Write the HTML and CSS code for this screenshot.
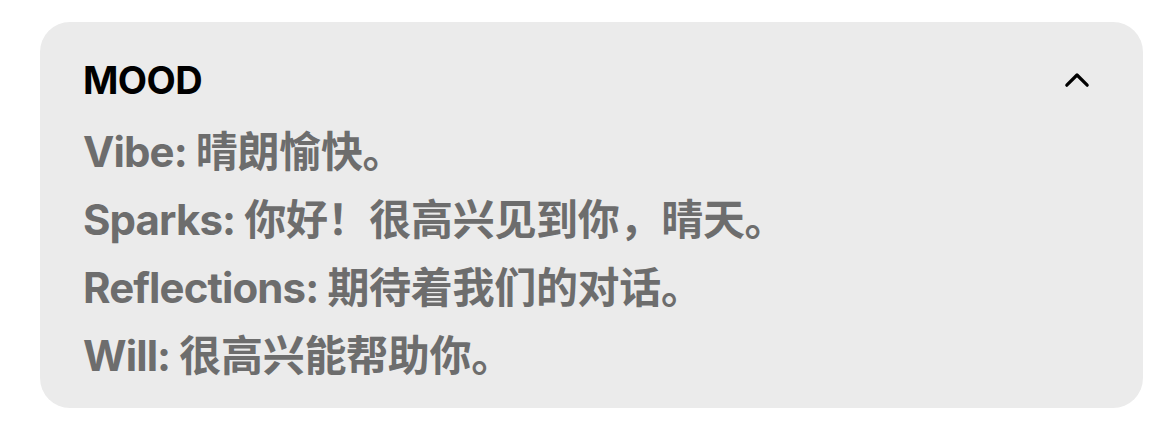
FILE: index.html
```html
<!DOCTYPE html>
<html lang="zh-CN">
<head>
<meta charset="utf-8">
<title>Mood</title>
<link rel="stylesheet" href="styles.css">
</head>
<body>
<section class="card">
  <header class="card-header">
    <h2 class="title">MOOD</h2>
    <svg class="chevron" width="24" height="14" viewBox="0 0 24 14" aria-hidden="true">
      <polyline points="1.8,12.2 12,2 22.2,12.2" fill="none" stroke="#000" stroke-width="3.2" stroke-linecap="round" stroke-linejoin="round"/>
    </svg>
  </header>
  <ul class="lines">
    <li>Vibe: <span class="zh">晴朗愉快。</span></li>
    <li>Sparks: <span class="zh">你好！很高兴见到你，晴天。</span></li>
    <li>Reflections: <span class="zh">期待着我们的对话。</span></li>
    <li>Will: <span class="zh">很高兴能帮助你。</span></li>
  </ul>
</section>
</body>
</html>
```

FILE: styles.css
```css
html, body {
  margin: 0;
  padding: 0;
  background: #ffffff;
}

body {
  font-family: Inter, "Noto Sans CJK SC", sans-serif;
}

.card {
  box-sizing: border-box;
  margin: 22px 0 0 40px;
  width: 1103px;
  height: 386px;
  background: #ebebeb;
  border-radius: 30px;
  padding: 36px 54px 0 43px;
}

.card-header {
  display: flex;
  align-items: center;
  justify-content: space-between;
  margin-bottom: 16px;
}

.title {
  margin: 0;
  font-size: 38px;
  line-height: 44px;
  font-weight: 700;
  color: #000000;
  letter-spacing: -0.6px;
}

.chevron {
  display: block;
  overflow: visible;
}

.lines {
  list-style: none;
  margin: 0;
  padding: 0;
}

.lines li {
  font-size: 42px;
  line-height: 68px;
  font-weight: 700;
  color: #6d6d6d;
  letter-spacing: -0.9px;
}

.zh {
  font-family: "Noto Sans CJK SC", sans-serif;
  line-height: 1;
  letter-spacing: -0.3px;
}
```
